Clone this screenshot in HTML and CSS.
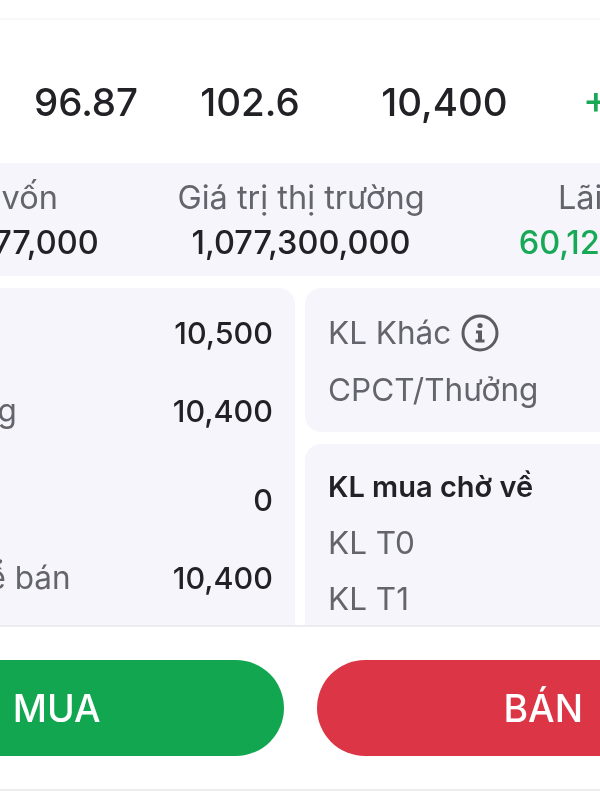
FILE: index.html
```html
<!DOCTYPE html>
<html>
  <head>
    <title>Danh mục</title>
    <link rel="stylesheet" href="styles.css">
  </head>
  <body>
    <div class="page">
      <div class="rule-top"></div>

      <div class="stats">
        <span>96.87</span>
        <span>102.6</span>
        <span>10,400</span>
        <span class="stat-gain">+5.91%</span>
      </div>

      <div class="summary bleed">
        <div class="sum-col sum-first">
          <div class="sum-label">Giá vốn</div>
          <div class="sum-value">1,017,177,000</div>
        </div>
        <div class="sum-col">
          <div class="sum-label">Giá trị thị trường</div>
          <div class="sum-value">1,077,300,000</div>
        </div>
        <div class="sum-col">
          <div class="sum-label">Lãi/Lỗ</div>
          <div class="sum-value green">60,123,000</div>
        </div>
      </div>

      <div class="cards bleed">
        <div class="card card-left">
          <div class="row"><span class="label">Tổng KL</span><span class="num">10,500</span></div>
          <div class="row"><span class="label">KL thường</span><span class="num">10,400</span></div>
          <div class="row row-gap"><span class="label">Lô lẻ</span><span class="num">0</span></div>
          <div class="row"><span class="label">KL có thể bán</span><span class="num">10,400</span></div>
        </div>
        <div class="card-stack">
          <div class="card card-other">
            <div class="line">
              KL Khác
              <svg class="info" width="38" height="38" viewBox="0 0 38 38">
                <circle cx="19" cy="19" r="17" fill="none" stroke="#5b5b62" stroke-width="3"/>
                <circle cx="19" cy="11.5" r="2.6" fill="#5b5b62"/>
                <path d="M15 16.5h6v9h2.5v3h-9v-3H17v-6h-2z" fill="#5b5b62"/>
              </svg>
            </div>
            <div class="line">CPCT/Thưởng</div>
          </div>
          <div class="card card-pending">
            <div class="line line-head">KL mua chờ về</div>
            <div class="line">KL T0</div>
            <div class="line">KL T1</div>
          </div>
        </div>
      </div>

      <div class="rule"></div>

      <div class="actions bleed">
        <div class="btn btn-buy">MUA</div>
        <div class="btn btn-sell">BÁN</div>
      </div>

      <div class="rule"></div>
    </div>
  </body>
</html>
```

FILE: styles.css
```css
body {
  margin: 0;
  background: #fff;
  font-family: Inter, "Noto Sans", sans-serif;
  color: #222226;
}
.page {
  width: 600px;
  height: 800px;
  overflow: hidden;
  filter: blur(0.5px);
}
.bleed {
  margin-left: -170px;
  width: 940px;
}
.rule-top {
  height: 2px;
  margin-top: 18px;
  background: #f8f8f8;
}
.stats {
  display: grid;
  grid-template-columns: 172px 156px 233px 1fr;
  align-items: center;
  height: 123px;
  padding-top: 20px;
  font-size: 38.5px;
  font-weight: 550;
  text-align: center;
  white-space: nowrap;
}
.stats .stat-gain {
  padding-left: 22px;
  text-align: left;
  color: #17a956;
}
.summary {
  display: grid;
  grid-template-columns: 314px 314px 294px;
  height: 113px;
  background: #f5f5fb;
  text-align: center;
}
.sum-first {
  padding-left: 26px;
}
.sum-label {
  margin-top: 15px;
  font-size: 32.5px;
  line-height: 40px;
  color: #64646c;
}
.sum-value {
  font-size: 32.5px;
  font-weight: 550;
  line-height: 50px;
}
.green {
  color: #17a956;
}
.cards {
  display: grid;
  grid-template-columns: 465px 1fr;
  gap: 10px;
  height: 337px;
  margin-top: 12px;
  overflow: hidden;
}
.card {
  background: #f5f5fb;
  border-radius: 16px;
}
.card-left {
  height: 360px;
  padding: 5px 22px 0 35px;
}
.row {
  display: flex;
  justify-content: space-between;
  align-items: center;
  height: 78px;
}
.row-gap {
  margin-top: 11px;
}
.label {
  font-size: 31.5px;
  color: #64646c;
}
.num {
  font-size: 30.5px;
  font-weight: 550;
}
.card-stack {
  display: flex;
  flex-direction: column;
  gap: 12px;
}
.card-other {
  height: 144px;
  padding: 16px 0 0 23px;
  box-sizing: border-box;
}
.card-other .line {
  height: 57px;
  gap: 10px;
}
.card-pending {
  height: 220px;
  flex: none;
  padding: 14px 0 0 23px;
}
.line {
  display: flex;
  align-items: center;
  gap: 12px;
  height: 56px;
  font-size: 31.5px;
  color: #64646c;
}
.line-head {
  font-size: 29px;
  font-weight: 600;
  color: #222226;
}
.rule {
  height: 2px;
  background: #ececee;
}
.actions {
  display: flex;
  gap: 33px;
  padding: 33px 0;
}
.btn {
  flex: 1;
  display: flex;
  align-items: center;
  justify-content: center;
  height: 96px;
  border-radius: 48px;
  font-size: 37.5px;
  font-weight: 500;
  color: #fff;
}
.btn-buy {
  background: #12a650;
}
.btn-sell {
  background: #dc3545;
}
```
